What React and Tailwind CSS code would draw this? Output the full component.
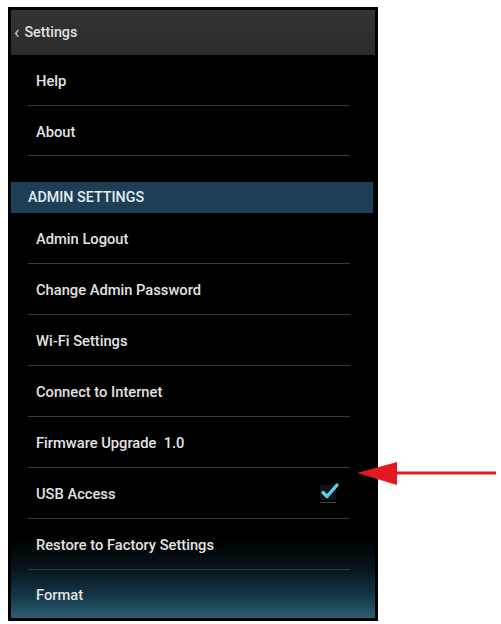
export default function App() {
  const font = { fontFamily: "Roboto, 'Noto Sans', sans-serif" };
  const adminRows = [
    "Admin Logout",
    "Change Admin Password",
    "Wi-Fi Settings",
    "Connect to Internet",
    "Firmware Upgrade  1.0",
    "USB Access",
    "Restore to Factory Settings",
    "Format",
  ];
  const Row = ({ label, h, divider = true, right = null }) => (
    <div className={`relative flex items-center shrink-0 ${h}`}>
      <span className="pl-[25px] pt-[2px] text-[14.7px] font-medium text-[#e2e2e2] whitespace-pre">{label}</span>
      {right}
      {divider && (
        <div className="absolute bottom-0 left-[17px] w-[322px] h-px bg-[#3a3a3a]" />
      )}
    </div>
  );
  return (
    <div className="relative w-[501px] h-[624px] bg-white pt-[7px] pl-[8px]" style={font}>
      <div className="w-[370px] h-[614px] bg-black p-[3px]">
        <div className="flex flex-col w-[364px] h-[608px] overflow-hidden bg-[linear-gradient(to_bottom,#000_0%,#000_87%,#07161d_92%,#143847_96.5%,#2d6074_100%)]">
          <div className="flex items-center h-[45px] shrink-0 bg-[linear-gradient(to_bottom,#343434,#2b2b2b)]">
            <span className="pl-[3px] text-[18px] text-[#cfcfcf] leading-none -mt-[2px]">‹</span>
            <span className="pl-[5px] text-[14.3px] font-medium text-[#e0e0e0]">Settings</span>
          </div>
          <Row label="Help" h="h-[51px]" />
          <Row label="About" h="h-[50px]" />
          <div className="h-[26px] shrink-0" />
          <div className="flex items-center h-[31px] shrink-0 w-[362px] bg-[#1c3f56]">
            <span className="pl-[17px] text-[14.3px] font-medium text-[#e4ecf0]">ADMIN SETTINGS</span>
          </div>
          {adminRows.map((label, i) => (
            <Row
              key={label}
              label={label}
              h={i === adminRows.length - 1 ? "h-[48px]" : "h-[51px]"}
              divider={i !== adminRows.length - 1}
              right={
                label === "USB Access" ? (
                  <svg className="absolute left-[305px] top-[11px]" width="26" height="26" viewBox="0 0 26 26">
                    <rect x="4" y="6" width="16" height="15" fill="#0d1418" />
                    <line x1="4" y1="23.5" x2="20" y2="23.5" stroke="#5a3a2a" strokeWidth="1" />
                    <path d="M7 13.5 L11 17.5 L21 6" fill="none" stroke="#5fd0e6" strokeWidth="3.4" strokeLinecap="round" strokeLinejoin="round" />
                  </svg>
                ) : null
              }
            />
          ))}
        </div>
      </div>
      <svg className="absolute left-[355px] top-[460px]" width="146" height="28" viewBox="0 0 146 28">
        <polygon points="2,13 42,2 42,25" fill="#e3191f" />
        <rect x="40" y="11.5" width="101" height="3" fill="#e3191f" />
      </svg>
    </div>
  );
}
